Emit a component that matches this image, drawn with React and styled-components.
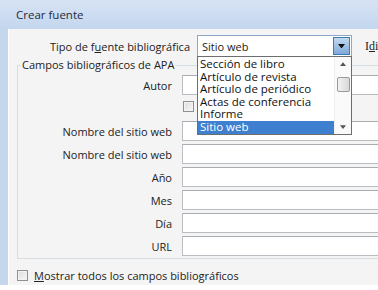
import React from 'react'
import styled, { createGlobalStyle } from 'styled-components'

const GlobalStyle = createGlobalStyle`
  body {
    margin: 0;
    background: #fff;
    font-family: "Open Sans", "Noto Sans", sans-serif;
    color: #222;
  }
`

const Window = styled.div`
  width: 378px;
  height: 285px;
  display: flex;
  flex-direction: column;
  overflow: hidden;
`

const TitleBar = styled.div`
  height: 29px;
  flex: none;
  display: flex;
  align-items: center;
  padding-left: 16px;
  background: linear-gradient(#d6e3f4, #c4d6ee);
  font-size: 11.5px;
  color: #1e2b3c;
`

const Frame = styled.div`
  flex: 1;
  display: flex;
  border-left: 8px solid #c5d6ed;
`

const Content = styled.div`
  flex: 1;
  display: flex;
  flex-direction: column;
  background: #f4f4f4;
  border-left: 1px solid #fdfdfd;
  font-size: 11px;
`

const TypeRow = styled.div`
  display: grid;
  grid-template-columns: 181px 155px auto;
  column-gap: 7px;
  align-items: center;
  margin-top: 6px;
  height: 22px;
`

const RightLabel = styled.span`
  text-align: right;
  white-space: nowrap;
`

const Key = styled.span`
  text-decoration: underline;
`

const Combo = styled.div`
  position: relative;
  height: 22px;
  box-sizing: border-box;
  border: 1px solid #8fa7c6;
  background: #fff;
  display: flex;
  align-items: center;
  padding-left: 4px;
`

const ComboValue = styled.span`
  flex: 1;
`

const ComboButton = styled.span`
  width: 17px;
  height: 18px;
  margin-right: 1px;
  box-sizing: border-box;
  border: 1px solid #3f7bb3;
  background: linear-gradient(#c2d9f1, #7ea9d9);
  display: flex;
  align-items: center;
  justify-content: center;
`

const List = styled.div`
  position: absolute;
  left: -1px;
  right: -1px;
  top: 20px;
  height: 79px;
  box-sizing: border-box;
  border: 1px solid #6e6e6e;
  background: #fff;
  display: flex;
  z-index: 5;
`

const Items = styled.div`
  flex: 1;
  padding-top: 1px;
`

const Item = styled.div`
  height: 12.6px;
  line-height: 12.6px;
  padding-left: 2px;
  white-space: nowrap;
  font-size: 11.5px;
  background: ${p => (p.$active ? '#3e7fd0' : 'transparent')};
  color: ${p => (p.$active ? '#fff' : '#111')};
`

const ScrollBar = styled.div`
  width: 16px;
  display: flex;
  flex-direction: column;
  align-items: center;
  background: #fafafa;
  border-left: 1px solid #f0f0f0;
`

const Arrow = styled.div`
  height: 14px;
  display: flex;
  align-items: center;
  justify-content: center;
`

const Track = styled.div`
  flex: 1;
  width: 100%;
  display: flex;
  flex-direction: column;
  align-items: center;
  padding-top: 6px;
`

const Thumb = styled.div`
  width: 13px;
  height: 15px;
  box-sizing: border-box;
  border: 1px solid #9a9a9a;
  border-radius: 2px;
  background: linear-gradient(90deg, #f2f2f2, #d8d8d8);
`

const LangLabel = styled.span`
  margin-left: 6px;
  font-family: "Liberation Serif", serif;
  font-size: 12px;
  white-space: nowrap;
`

const GroupBox = styled.fieldset`
  margin: 0 0 0 8px;
  padding: 0 0 2px 0;
  border: 1px solid #d6dde3;
  border-right: none;
  min-width: 0;
`

const Legend = styled.legend`
  margin-left: 3px;
  padding: 0 1px;
  font-size: 11px;
  line-height: 16px;
`

const Rows = styled.div`
  display: flex;
  flex-direction: column;
  gap: 3px;
  padding-top: 2px;
`

const Row = styled.div`
  display: grid;
  grid-template-columns: 154px 1fr;
  column-gap: 10px;
  align-items: center;
  height: 20px;
`

const Input = styled.div`
  height: 20px;
  box-sizing: border-box;
  border: 1px solid #b9bcc0;
  border-top-color: #a9acb0;
  background: #fff;
  min-width: 0;
`

const CheckLine = styled.div`
  display: flex;
  align-items: flex-start;
  gap: 4px;
  height: 100%;
`

const Box = styled.span`
  flex: none;
  width: 11px;
  height: 11px;
  margin-top: ${p => p.$offset || 0}px;
  margin-left: ${p => p.$indent || 0}px;
  box-sizing: border-box;
  border: 1px solid #8f9090;
  background: linear-gradient(135deg, #dcdcdc, #f7f7f7);
  box-shadow: inset 0 0 0 1px #f3f3f3;
`

const Footer = styled.div`
  display: flex;
  align-items: center;
  gap: 6px;
  margin: 9px 0 0 8px;
  height: 14px;
  font-size: 11px;
`

const types = [
  'Sección de libro',
  'Artículo de revista',
  'Artículo de periódico',
  'Actas de conferencia',
  'Informe',
  'Sitio web',
]

const fields = ['Nombre del sitio web', 'Nombre del sitio web', 'Año', 'Mes', 'Día', 'URL']

const Triangle = ({ up, color = '#222', size = 7 }) => (
  <svg width={size} height={size / 2 + 1} viewBox="0 0 8 5">
    <path d={up ? 'M0 5 L4 0 L8 5 Z' : 'M0 0 L8 0 L4 5 Z'} fill={color} />
  </svg>
)

export default function App() {
  return (
    <>
      <GlobalStyle />
      <Window>
        <TitleBar>Crear fuente</TitleBar>
        <Frame>
          <Content>
            <TypeRow>
              <RightLabel>
                Tipo de f<Key>u</Key>ente bibliográfica
              </RightLabel>
              <Combo>
                <ComboValue>Sitio web</ComboValue>
                <ComboButton>
                  <Triangle color="#111" />
                </ComboButton>
                <List>
                  <Items>
                    {types.map(t => (
                      <Item key={t} $active={t === 'Sitio web'}>{t}</Item>
                    ))}
                  </Items>
                  <ScrollBar>
                    <Arrow><Triangle up color="#555" size={6} /></Arrow>
                    <Track><Thumb /></Track>
                    <Arrow><Triangle color="#555" size={6} /></Arrow>
                  </ScrollBar>
                </List>
              </Combo>
              <LangLabel>I<Key>d</Key>ioma</LangLabel>
            </TypeRow>

            <GroupBox>
              <Legend>Campos bibliográficos de APA</Legend>
              <Rows>
                <Row>
                  <RightLabel>Autor</RightLabel>
                  <Input />
                </Row>
                <Row>
                  <span />
                  <CheckLine>
                    <Box $offset={3} $indent={1} />
                    <Input />
                  </CheckLine>
                </Row>
                {fields.map((f, i) => (
                  <Row key={i}>
                    <RightLabel>{f}</RightLabel>
                    <Input />
                  </Row>
                ))}
              </Rows>
            </GroupBox>

            <Footer>
              <Box />
              <span>
                <Key>M</Key>ostrar todos los campos bibliográficos
              </span>
            </Footer>
          </Content>
        </Frame>
      </Window>
    </>
  )
}
